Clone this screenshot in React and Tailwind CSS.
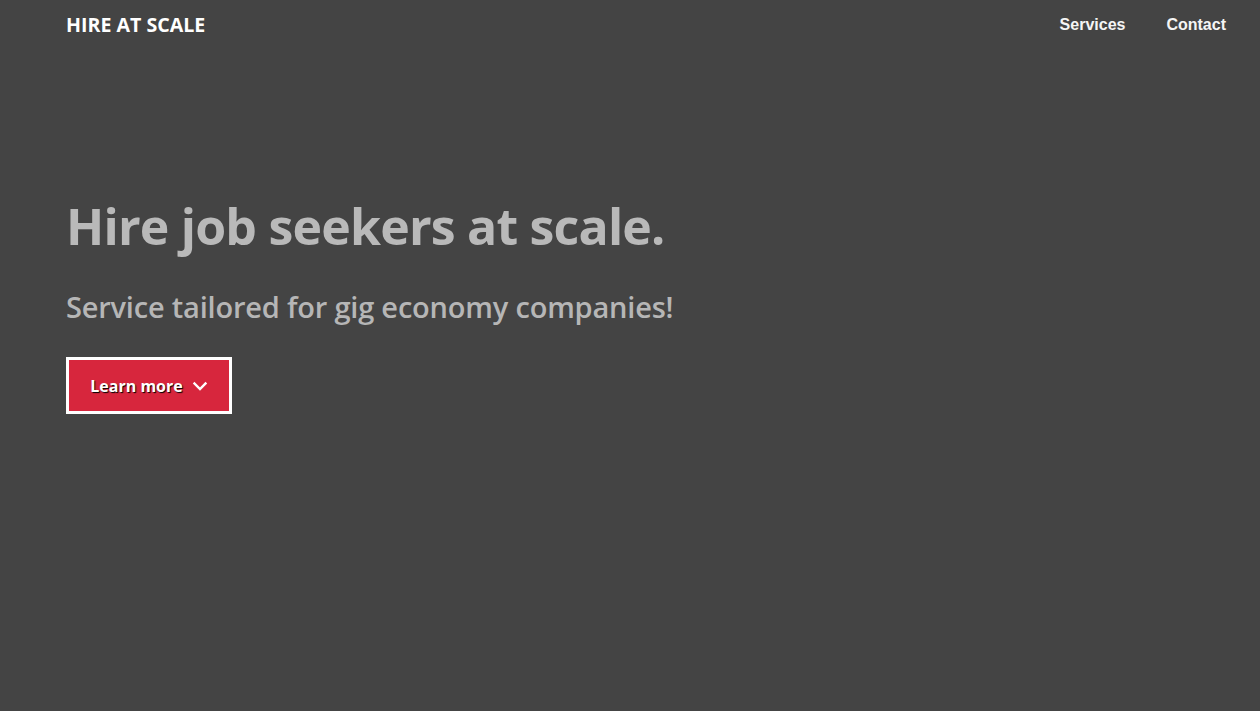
import React from "react";

function Chevron() {
  return (
    <svg width="16" height="16" viewBox="0 0 16 16" fill="none" stroke="white" strokeWidth="2.4" strokeLinecap="square">
      <path d="M2.5 5.5 L8 11 L13.5 5.5" />
    </svg>
  );
}

export default function App() {
  return (
    <div className="min-h-[711px] w-full bg-[#444444] font-['Open_Sans',sans-serif]">
      <header className="flex h-[50px] items-center justify-between pl-[66px] pr-[34px]">
        <div className="text-[19.6px] font-bold tracking-[0px] text-white">HIRE AT SCALE</div>
        <nav className="-mt-[1px] flex gap-[41px] font-['Liberation_Sans',Arial,sans-serif] text-[16px] font-bold text-[#f5f5f5]">
          <a href="#services">Services</a>
          <a href="#contact">Contact</a>
        </nav>
      </header>
      <main className="pl-[66px] pt-[141px]">
        <h1 className="text-[50px] font-bold leading-[70px] tracking-[-0.8px] text-[#b9b9b9]">
          Hire job seekers at scale.
        </h1>
        <p className="mt-[26px] text-[29px] font-semibold leading-[40px] tracking-[-0.2px] text-[#b6b6b6]">
          Service tailored for gig economy companies!
        </p>
        <button className="mt-[30px] flex h-[57px] w-[166px] items-center justify-center gap-[9px] border-[3px] border-white bg-[#d7263d] text-[16px] font-bold text-white [text-shadow:1px_1px_1px_#000]">
          <span>Learn more</span>
          <Chevron />
        </button>
      </main>
    </div>
  );
}
